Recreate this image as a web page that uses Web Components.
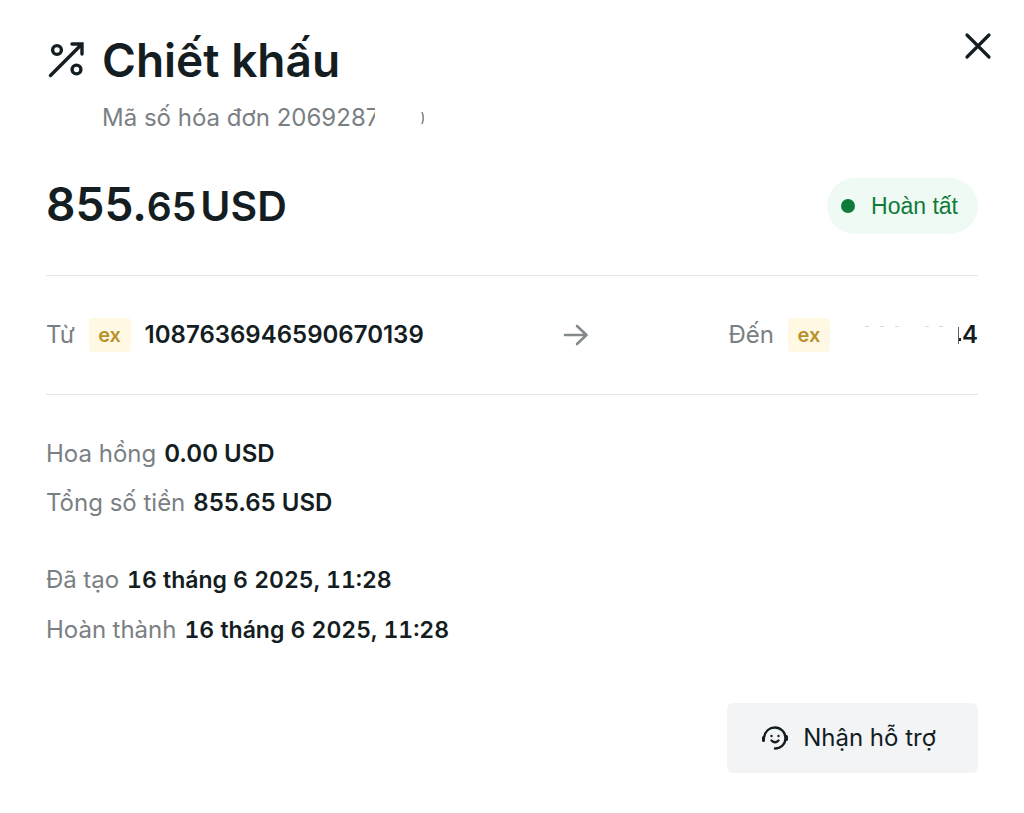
<!DOCTYPE html>
<html lang="vi">
<head>
<meta charset="utf-8">
<meta name="viewport" content="width=device-width, initial-scale=1">
<title>Chiết khấu</title>
<style>
	body {
		margin: 0;
		background: #fff;
		color: #141d22;
		font: 400 24px/32px Inter, "Liberation Sans", sans-serif;
	}

	.dates {
		--value-size: 23px;
		font-variant-numeric: tabular-nums;
	}
</style>
</head>
<body>

<transaction-details>
	<dialog-header slot="header" heading="Chiết khấu">Mã số hóa đơn <masked-invoice>2069287</masked-invoice></dialog-header>
	<amount-row slot="amount" whole="855" cents="65" currency="USD">
		<status-badge>Hoàn tất</status-badge>
	</amount-row>
	<transfer-route slot="route">
		<account-label slot="from" label="Từ">1087636946590670139</account-label>
		<account-label slot="to" label="Đến"><masked-account>4</masked-account></account-label>
	</transfer-route>
	<detail-group>
		<detail-line label="Hoa hồng">0.00 USD</detail-line>
		<detail-line label="Tổng số tiền">855.65 USD</detail-line>
	</detail-group>
	<detail-group class="dates">
		<detail-line label="Đã tạo">16 tháng 6 2025, 11:28</detail-line>
		<detail-line label="Hoàn thành">16 tháng 6 2025, 11:28</detail-line>
	</detail-group>
	<support-button slot="actions">Nhận hỗ trợ</support-button>
</transaction-details>

<script>
/**
 * Base class: attaches an open shadow root and fills it from render().
 */
class BaseElement extends HTMLElement {
	constructor() {
		super();
		this.attachShadow({ mode: 'open' });
	}

	connectedCallback() {
		this.shadowRoot.innerHTML = this.render();
	}
}

/**
 * The whole dialog, with slots for each section.
 */
class TransactionDetails extends BaseElement {
	render() {
		return `
		<style>
			:host { display: block; }
			.body { padding: 0 46px 42px; }
			.route {
				border: solid #e4e6e7;
				border-width: 1px 0;
				padding: 42px 0;
			}
			.details {
				display: flex;
				flex-direction: column;
				gap: 28px;
				padding: 34px 0 48px;
			}
			.actions { display: flex; justify-content: flex-end; }
		</style>
		<slot name="header"></slot>
		<div class="body">
			<slot name="amount"></slot>
			<div class="route"><slot name="route"></slot></div>
			<div class="details"><slot></slot></div>
			<div class="actions"><slot name="actions"></slot></div>
		</div>`;
	}
}

/**
 * Icon, title, subtitle and the close button.
 */
class DialogHeader extends BaseElement {
	render() {
		return `
		<style>
			:host {
				display: flex;
				align-items: flex-start;
				gap: 16px;
				padding: 28px 32px 42px 48px;
			}
			.icon { flex: none; margin-top: 12px; }
			.text { flex: 1; }
			h1 { margin: 0; font-size: 46px; line-height: 64px; font-weight: 600; }
			p { margin: 10px 0 0; color: #7a7f83; }
			button {
				padding: 0;
				border: 0;
				background: none;
				color: inherit;
				cursor: pointer;
				margin-top: 4px;
			}
			svg { display: block; }
		</style>
		<svg class="icon" width="38" height="38" viewBox="0 0 38 38" fill="none" stroke="currentColor" stroke-width="3.400" aria-hidden="true">
			<path d="M2.500 35.500 33.500 4.500M24 4H34V14" stroke-linecap="round" stroke-linejoin="miter"/>
			<circle cx="9" cy="10" r="4.400"/>
			<circle cx="28.500" cy="29.500" r="4.400"/>
		</svg>
		<div class="text">
			<h1>${this.getAttribute('heading')}</h1>
			<p><slot></slot></p>
		</div>
		<button type="button" aria-label="Đóng">
			<svg width="28" height="28" viewBox="0 0 28 28" fill="none" stroke="currentColor" stroke-width="3.200" stroke-linecap="round">
				<path d="M3 3 25 25M25 3 3 25"/>
			</svg>
		</button>`;
	}
}

/**
 * Invoice number whose last digits are hidden, only slivers remain visible.
 */
class MaskedInvoice extends BaseElement {
	render() {
		return `
		<style>
			:host { display: inline-flex; }
			.digits { display: flex; overflow: hidden; }
			.digits span { margin-right: -4px; }
		</style>
		<span class="digits"><span><slot></slot></span></span>
		<svg width="52" height="32" viewBox="0 0 52 32" fill="none" stroke="currentColor" aria-hidden="true">
			<path d="M47 10Q49.500 16 47 22" stroke-width="1.500"/>
		</svg>`;
	}
}

class AmountRow extends BaseElement {
	render() {
		return `
		<style>
			:host {
				display: flex;
				align-items: center;
				justify-content: space-between;
				padding-bottom: 40px;
			}
			.amount {
				display: flex;
				align-items: baseline;
				font-size: 39px;
				line-height: 56px;
				font-weight: 600;
			}
			.whole { font-size: 46px; }
			.currency { margin-left: 4px; font-size: 41px; }
		</style>
		<div class="amount">
			<span class="whole">${this.getAttribute('whole')}.</span>
			<span>${this.getAttribute('cents')}</span>
			<span class="currency">${this.getAttribute('currency')}</span>
		</div>
		<slot></slot>`;
	}
}

class StatusBadge extends BaseElement {
	render() {
		return `
		<style>
			:host {
				display: flex;
				align-items: center;
				gap: 16px;
				padding: 12px 20px 12px 14px;
				border-radius: 28px;
				background: #effaf4;
				color: #0f7b3a;
				font-family: "Liberation Sans", Arial, sans-serif;
				font-size: 23px;
			}
			.dot { width: 14px; height: 14px; border-radius: 50%; background: currentColor; }
		</style>
		<span class="dot"></span>
		<span><slot></slot></span>`;
	}
}

/**
 * From account, arrow, to account.
 */
class TransferRoute extends BaseElement {
	render() {
		return `
		<style>
			:host { display: flex; align-items: center; justify-content: space-between; }
			svg { display: block; color: #84898c; }
		</style>
		<slot name="from"></slot>
		<svg width="26" height="24" viewBox="0 0 26 24" fill="none" stroke="currentColor" stroke-width="2.600" stroke-linecap="round" stroke-linejoin="round" aria-hidden="true">
			<path d="M2 12H23M14 3 23.500 12 14 21"/>
		</svg>
		<slot name="to"></slot>`;
	}
}

class AccountLabel extends BaseElement {
	render() {
		return `
		<style>
			:host { display: flex; align-items: center; gap: 14px; }
			.label { color: #7a7f83; }
			.logo {
				display: flex;
				align-items: center;
				justify-content: center;
				width: 42px;
				height: 34px;
				border-radius: 4px;
				background: #fff9e4;
				color: #b8922f;
				font-size: 20px;
				font-weight: 600;
			}
			.value { font-weight: 600; }
		</style>
		<span class="label">${this.getAttribute('label')}</span>
		<span class="logo">ex</span>
		<span class="value"><slot></slot></span>`;
	}
}

/**
 * Account number with everything hidden but the last digit and a few traces.
 */
class MaskedAccount extends BaseElement {
	render() {
		return `
		<style>
			:host { display: flex; }
		</style>
		<svg width="118" height="32" viewBox="0 0 118 32" fill="currentColor" aria-hidden="true">
			<path d="M21 7h4v1h-4zM36 7h4v1h-4zM51 7h4v1h-4zM81 7h4v1h-4zM95 7h4v1h-4z" opacity=".16"/>
			<path d="M114 8h1v17h-1z" opacity=".7"/>
			<path d="M115 19h2v3h-2z"/>
		</svg>
		<span><slot></slot></span>`;
	}
}

class DetailGroup extends BaseElement {
	render() {
		return `
		<style>
			:host { display: block; }
		</style>
		<slot></slot>`;
	}
}

class DetailLine extends BaseElement {
	render() {
		return `
		<style>
			:host { display: flex; align-items: baseline; gap: 8px; line-height: 49px; }
			.label { color: #7a7f83; }
			.value { font-size: var(--value-size, 24px); font-weight: 600; }
		</style>
		<span class="label">${this.getAttribute('label')}</span>
		<span class="value"><slot></slot></span>`;
	}
}

class SupportButton extends BaseElement {
	render() {
		return `
		<style>
			:host { display: block; }
			button {
				display: flex;
				align-items: center;
				gap: 14px;
				padding: 19px 42px 19px 34px;
				border: 0;
				border-radius: 6px;
				background: #f3f4f6;
				color: inherit;
				font: inherit;
				cursor: pointer;
			}
		</style>
		<button type="button">
			<svg width="28" height="28" viewBox="0 0 28 28" fill="none" stroke="currentColor" stroke-width="2.400" stroke-linecap="round" aria-hidden="true">
				<path d="M3 13.500C4 7 8.500 3.500 14 3.500S24.500 8 24.500 14 20 24.500 14 24.500"/>
				<path d="M2.500 13.500V16.500M25.500 12.500V15.500" stroke-width="3"/>
				<path d="M10.500 16.500Q14 20 17.500 16.500"/>
				<circle cx="10.500" cy="12" r="1.200" fill="currentColor" stroke="none"/>
				<circle cx="17.500" cy="12" r="1.200" fill="currentColor" stroke="none"/>
			</svg>
			<slot></slot>
		</button>`;
	}
}

customElements.define('transaction-details', TransactionDetails);
customElements.define('dialog-header', DialogHeader);
customElements.define('masked-invoice', MaskedInvoice);
customElements.define('amount-row', AmountRow);
customElements.define('status-badge', StatusBadge);
customElements.define('transfer-route', TransferRoute);
customElements.define('account-label', AccountLabel);
customElements.define('masked-account', MaskedAccount);
customElements.define('detail-group', DetailGroup);
customElements.define('detail-line', DetailLine);
customElements.define('support-button', SupportButton);
</script>
</body>
</html>
